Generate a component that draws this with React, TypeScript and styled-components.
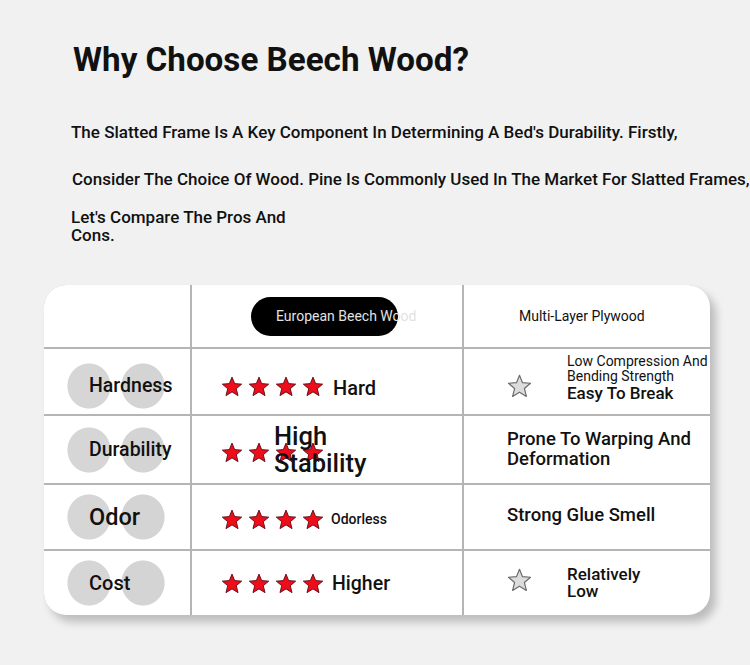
import styled, { createGlobalStyle } from 'styled-components'

const GlobalStyle = createGlobalStyle`
  body {
    margin: 0;
    background: #f1f1f1;
    font-family: Roboto, 'Liberation Sans', sans-serif;
    color: #111;
  }
`

const Page = styled.div`
  height: 665px;
  padding-top: 40px;
  box-sizing: border-box;
  overflow: hidden;
`

const Title = styled.h1`
  margin: 0 0 0 73px;
  font-size: 33.2px;
  line-height: 40px;
  font-weight: 700;
`

const Intro = styled.p<{ $top: number; $left: number; $width?: number; $lh?: number }>`
  margin: ${({ $top }) => $top}px 0 0 ${({ $left }) => $left}px;
  width: ${({ $width }) => ($width ? `${$width}px` : 'auto')};
  white-space: ${({ $width }) => ($width ? 'normal' : 'nowrap')};
  font-size: 17px;
  line-height: ${({ $lh }) => $lh || 20}px;
  font-weight: 500;
`

const Card = styled.div`
  margin: 41px 0 0 44px;
  width: 666px;
  display: grid;
  grid-template-columns: 146px 270px 246px;
  grid-template-rows: 62px 65px 67px 64px 64px;
  gap: 2px;
  background: #b5b5b5;
  border-radius: 22px;
  overflow: hidden;
  box-shadow: 6px 7px 9px rgba(0, 0, 0, 0.22);
`

const Cell = styled.div<{ $pad?: number }>`
  background: #fff;
  display: flex;
  align-items: center;
  padding-left: ${({ $pad }) => $pad || 0}px;
  min-width: 0;
`

const Pill = styled.div`
  width: 147px;
  height: 39px;
  box-sizing: border-box;
  padding-left: 25px;
  border-radius: 20px;
  background: #000;
  display: flex;
  align-items: center;
  white-space: nowrap;
  color: #e2e2e2;
  font-size: 14px;
  font-weight: 400;
`

const HeadText = styled.span`
  font-size: 14px;
  font-weight: 400;
  white-space: nowrap;
`

const Badge = styled.div<{ $dy: number; $size: number }>`
  margin: ${({ $dy }) => $dy * 2}px 0 0 23px;
  width: 99px;
  height: 46px;
  display: flex;
  align-items: center;
  padding-left: 22px;
  box-sizing: border-box;
  background:
    radial-gradient(ellipse 22px 23px at 22px 50%, #d6d6d6 0 96%, rgba(214, 214, 214, 0) 100%),
    radial-gradient(ellipse 22px 23px at 76px 50%, #d4d4d4 0 96%, rgba(212, 212, 212, 0) 100%);
  font-size: ${({ $size }) => $size}px;
  font-weight: 500;
  white-space: nowrap;
`

const Stars = styled.div<{ $dy: number }>`
  display: flex;
  gap: 5px;
  margin-top: ${({ $dy }) => $dy * 2}px;
`

const Note = styled.span<{ $size: number; $gap: number; $dy: number }>`
  margin: ${({ $dy }) => $dy * 2}px 0 0 ${({ $gap }) => $gap}px;
  font-size: ${({ $size }) => $size}px;
  font-weight: 500;
  white-space: nowrap;
`

const Overlay = styled.div`
  margin-left: -50px;
  font-size: 25.5px;
  line-height: 27px;
  font-weight: 500;
`

const Block = styled.div<{ $dy: number; $gap: number }>`
  margin: ${({ $dy }) => $dy * 2}px 0 0 ${({ $gap }) => $gap}px;
  font-weight: 500;
  white-space: nowrap;
`

const Line = styled.div<{ $size: number; $lh: number; $light?: boolean }>`
  font-size: ${({ $size }) => $size}px;
  line-height: ${({ $lh }) => $lh}px;
  font-weight: ${({ $light }) => ($light ? 400 : 500)};
`

const StarIcon = ({ outline, dy = 0 }: { outline?: boolean; dy?: number }) => (
  <svg
    width={outline ? 25 : 22}
    height={outline ? 24 : 21}
    viewBox="0 0 24 23"
    style={{ marginTop: dy * 2, flex: 'none' }}
  >
    <polygon
      points="12,1.2 14.9,8.3 22.6,8.9 16.7,13.9 18.6,21.5 12,17.4 5.4,21.5 7.3,13.9 1.4,8.9 9.1,8.3"
      fill={outline ? '#dcdcdc' : '#ee0d1a'}
      stroke={outline ? '#6a6a6a' : '#5c0c14'}
      strokeWidth={outline ? 1.1 : 1}
      strokeLinejoin="round"
    />
  </svg>
)

const FourStars = ({ dy }: { dy: number }) => (
  <Stars $dy={dy}>
    <StarIcon />
    <StarIcon />
    <StarIcon />
    <StarIcon />
  </Stars>
)

export default function App() {
  return (
    <Page>
      <GlobalStyle />
      <Title>Why Choose Beech Wood?</Title>
      <Intro $top={41.5} $left={71}>
        The Slatted Frame Is A Key Component In Determining A Bed's Durability. Firstly,
      </Intro>
      <Intro $top={27} $left={72}>
        Consider The Choice Of Wood. Pine Is Commonly Used In The Market For Slatted Frames,
      </Intro>
      <Intro $top={20.5} $left={71} $width={240} $lh={17.5}>
        Let's Compare The Pros And Cons.
      </Intro>

      <Card>
        <Cell />
        <Cell $pad={59}>
          <Pill>European Beech Wood</Pill>
        </Cell>
        <Cell $pad={55}>
          <HeadText>Multi-Layer Plywood</HeadText>
        </Cell>

        <Cell>
          <Badge $dy={4} $size={19.5}>Hardness</Badge>
        </Cell>
        <Cell $pad={29}>
          <FourStars dy={5} />
          <Note $size={20} $gap={9} $dy={6}>Hard</Note>
        </Cell>
        <Cell $pad={43}>
          <StarIcon outline dy={4.5} />
          <Block $dy={-3} $gap={35}>
            <Line $size={14} $lh={15} $light>Low Compression And</Line>
            <Line $size={14} $lh={15} $light>Bending Strength</Line>
            <Line $size={17} $lh={19}>Easy To Break</Line>
          </Block>
        </Cell>

        <Cell>
          <Badge $dy={0} $size={19.5}>Durability</Badge>
        </Cell>
        <Cell $pad={29}>
          <FourStars dy={2.5} />
          <Overlay>
            High
            <br />
            Stability
          </Overlay>
        </Cell>
        <Cell $pad={43}>
          <Block $dy={0} $gap={0}>
            <Line $size={18.5} $lh={19.3}>Prone To Warping And</Line>
            <Line $size={18.5} $lh={19.3}>Deformation</Line>
          </Block>
        </Cell>

        <Cell>
          <Badge $dy={0} $size={23.5}>Odor</Badge>
        </Cell>
        <Cell $pad={29}>
          <FourStars dy={2} />
          <Note $size={14} $gap={7} $dy={2}>Odorless</Note>
        </Cell>
        <Cell $pad={43}>
          <Note $size={18.5} $gap={0} $dy={-2.5}>Strong Glue Smell</Note>
        </Cell>

        <Cell>
          <Badge $dy={0} $size={20}>Cost</Badge>
        </Cell>
        <Cell $pad={29}>
          <FourStars dy={0} />
          <Note $size={19.5} $gap={8} $dy={0}>Higher</Note>
        </Cell>
        <Cell $pad={43}>
          <StarIcon outline dy={-3} />
          <Block $dy={0} $gap={35}>
            <Line $size={17} $lh={17.5}>Relatively</Line>
            <Line $size={17} $lh={17.5}>Low</Line>
          </Block>
        </Cell>
      </Card>
    </Page>
  )
}
